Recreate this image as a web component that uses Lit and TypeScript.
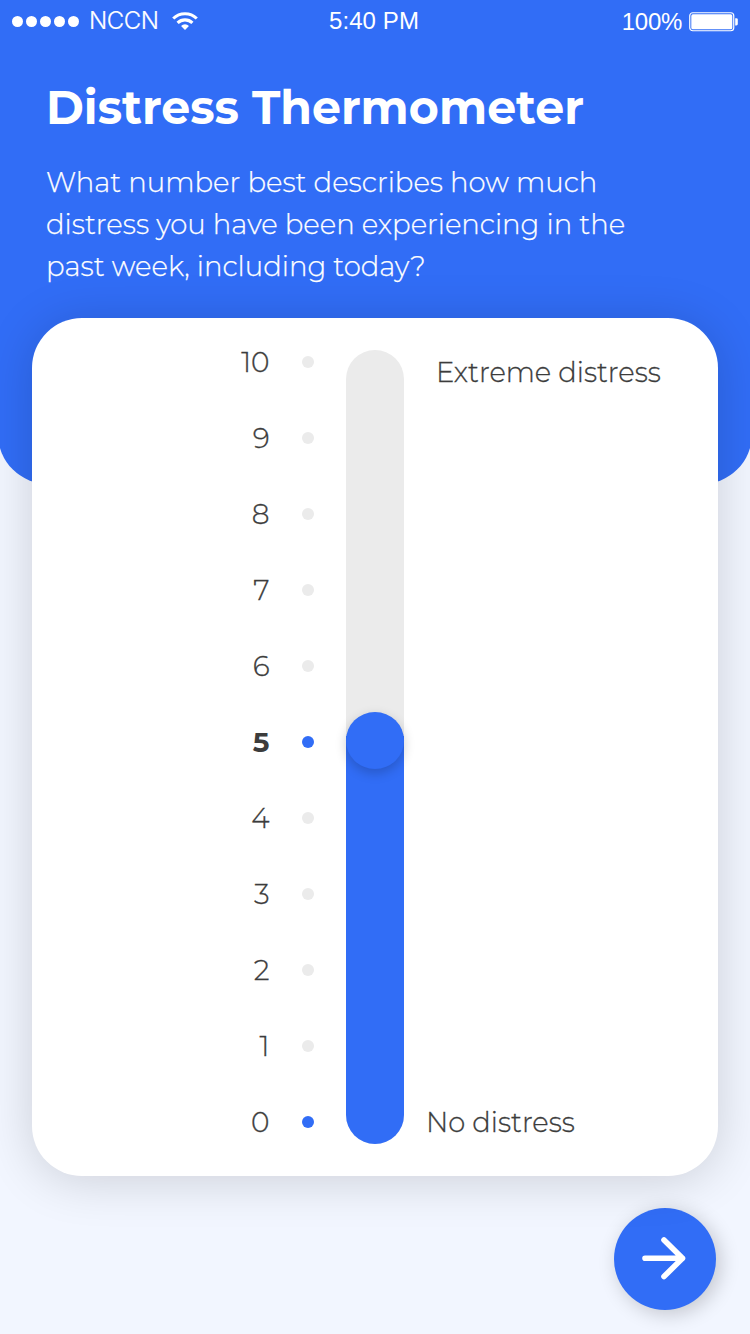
import { LitElement, html, css } from "lit";
import { customElement, state } from "lit/decorators.js";
import { classMap } from "lit/directives/class-map.js";

@customElement("status-bar")
class StatusBar extends LitElement {
  static styles = css`
    :host {
      display: grid;
      grid-template-columns: 1fr auto 1fr;
      height: 42px;
      align-items: center;
      color: #fff;
      padding: 0 14px 0 12px;
      font: 24px/28px "Liberation Sans", Arial, sans-serif;
    }
    .left { display: flex; align-items: center; }
    .dots { display: flex; gap: 3px; padding-top: 1px; }
    .dots i { width: 11px; height: 11px; border-radius: 50%; background: #fff; }
    .carrier { margin-left: 10px; font: 300 24px/28px Inter, sans-serif; letter-spacing: -0.45px; -webkit-text-stroke: 0.2px #fff; }
    .wifi { margin-left: 13px; display: block; }
    .time { letter-spacing: 0.1px; }
    .right { display: flex; align-items: center; justify-content: flex-end; padding-top: 1px; margin-right: -3px; }
    .pct { letter-spacing: -0.3px; padding-top: 1px; }
    .battery { margin-left: 7px; display: block; }
  `;
  render() {
    return html`
      <div class="left">
        <div class="dots"><i></i><i></i><i></i><i></i><i></i></div>
        <span class="carrier">NCCN</span>
        <svg class="wifi" width="26" height="20" viewBox="0 0 27 20">
          <g fill="none" stroke="#fff" stroke-width="3.2">
            <path d="M1.3 7.4A17.4 17.4 0 0 1 25.7 7.4" />
            <path d="M5.8 12A11 11 0 0 1 21.2 12" />
          </g>
          <path fill="#fff" d="M13.5 19.3L9.4 15.2A5.8 5.8 0 0 1 17.6 15.2Z" />
        </svg>
      </div>
      <span class="time">5:40 PM</span>
      <div class="right">
        <span class="pct">100%</span>
        <svg class="battery" width="50" height="20" viewBox="0 0 50 20">
          <rect x="0.75" y="0.75" width="44" height="18" rx="3" fill="none" stroke="#fff" stroke-width="1.2" />
          <rect x="2.3" y="2.3" width="41" height="15" rx="1.6" fill="#fff" />
          <path d="M46.2 6.2h1.2q1.4 0 1.4 1.4v4.4q0 1.4-1.4 1.4h-1.2z" fill="#fff" />
        </svg>
      </div>
    `;
  }
}

@customElement("app-root")
class AppRoot extends LitElement {
  @state() private value = 5;

  static styles = css`
    :host {
      display: block;
      height: 1334px;
      overflow: hidden;
      background: #f2f6ff;
      font-family: Montserrat, Inter, sans-serif;
    }
    .hero {
      box-sizing: border-box;
      height: 484px;
      margin: 0 -2px;
      padding: 0 2px;
      border-radius: 0 0 50px 50px;
      background: #316df6;
      color: #fff;
    }
    .title {
      margin: 36px 0 0 46px;
      font-size: 48px;
      line-height: 58px;
      font-weight: 700;
      transform: scaleX(0.955);
      transform-origin: 0 0;
      white-space: nowrap;
    }
    .question {
      margin: 25px 0 0 46px;
      font-size: 28px;
      line-height: 42px;
      font-weight: 300;
      transform: scaleX(0.983);
      transform-origin: 0 0;
      -webkit-text-stroke: 0.25px currentColor;
      white-space: nowrap;
    }
    .question span { display: block; }
    .card {
      box-sizing: border-box;
      position: relative;
      width: 686px;
      height: 858px;
      margin: -166px 0 0 32px;
      padding: 32px 0 0;
      border-radius: 50px;
      background: #fff;
      box-shadow: 0 4px 50px rgba(0, 0, 0, 0.16);
      display: grid;
      grid-template-columns: 282px 58px 1fr;
      column-gap: 32px;
      color: #3c3c3c;
      font-size: 28px;
      font-weight: 300;
      -webkit-text-stroke: 0.3px currentColor;
    }
    .scale { margin-top: -26px; }
    .step { display: flex; height: 76px; align-items: center; justify-content: flex-end; line-height: 34px; }
    .dot { width: 12px; height: 12px; margin-left: 32.5px; border-radius: 50%; background: #ebebeb; }
    .num.current { font-weight: 700; -webkit-text-stroke: 0; }
    .dot.on { background: #316df6; }
    .track {
      height: 794px;
      border-radius: 29px;
      background: #ebebeb;
      display: flex;
      flex-direction: column;
      justify-content: flex-end;
    }
    .fill { background: #316df6; border-radius: 0 0 29px 29px; }
    .knob {
      width: 58px;
      height: 57px;
      margin-top: -24px;
      border-radius: 50%;
      background: #316df6;
      box-shadow: 0 4px 12px rgba(0, 0, 0, 0.2);
    }
    .ends {
      display: flex;
      flex-direction: column;
      justify-content: space-between;
      align-items: flex-start;
      height: 794px;
      line-height: 34px;
      white-space: nowrap;
    }
    .ends span { transform: scaleX(0.978); transform-origin: 0 0; }
    .high { margin: 5px 0 0 0; }
    .low { margin: 0 0 5px -10px; }
    .actions { display: flex; justify-content: flex-end; padding: 32px 34px 0 0; }
    .next {
      width: 102px;
      height: 102px;
      padding: 0;
      border: 0;
      border-radius: 50%;
      background: #316df6;
      box-shadow: 4px 4px 20px rgba(0, 0, 0, 0.2);
    }
    .next svg { display: block; }
  `;

  render() {
    const steps = Array.from({ length: 11 }, (_, i) => 10 - i);
    return html`
      <header class="hero">
        <status-bar></status-bar>
        <h1 class="title">Distress Thermometer</h1>
        <div class="question">
          <span>What number best describes how much</span>
          <span>distress you have been experiencing in the</span>
          <span>past week, including today?</span>
        </div>
      </header>
      <main class="card">
        <div class="scale">
          ${steps.map(
            (n) => html`<div class="step" @click=${() => (this.value = n)}>
              <span class=${classMap({ num: true, current: n === this.value })}>${n}</span>
              <i class=${classMap({ dot: true, on: n === this.value || n === 0 })}></i>
            </div>`
          )}
        </div>
        <div class="track">
          <div class="fill" style="height:${28 + this.value * 76}px"><div class="knob"></div></div>
        </div>
        <div class="ends">
          <span class="high">Extreme distress</span>
          <span class="low">No distress</span>
        </div>
      </main>
      <div class="actions">
        <button class="next" aria-label="Next">
          <svg width="102" height="102" viewBox="0 0 102 102" fill="none" stroke="#fff" stroke-width="5.6" stroke-linecap="round" stroke-linejoin="round">
            <path d="M31 50.3H68.5M50 32L68.5 50.3L50 68.5" />
          </svg>
        </button>
      </div>
    `;
  }
}
